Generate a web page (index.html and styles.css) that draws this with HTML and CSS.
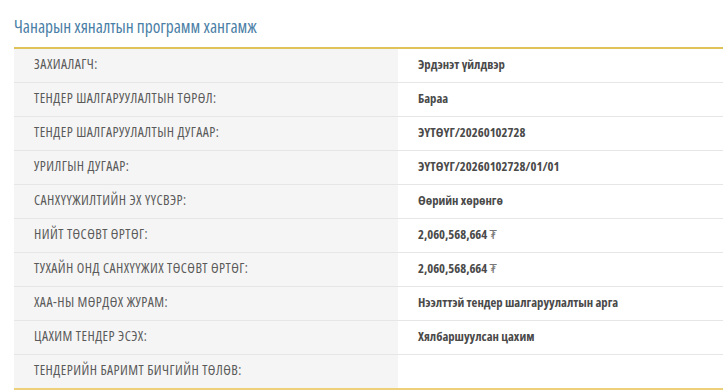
FILE: index.html
```html
<!DOCTYPE html>
<html lang="mn">
<head>
<meta charset="utf-8">
<title>Чанарын хяналтын программ хангамж</title>
<link rel="stylesheet" href="styles.css">
</head>
<body>
<div class="page">
  <h2 class="title">Чанарын хяналтын программ хангамж</h2>
  <table class="info">
    <tbody>
      <tr><th>ЗАХИАЛАГЧ:</th><td>Эрдэнэт үйлдвэр</td></tr>
      <tr><th>ТЕНДЕР ШАЛГАРУУЛАЛТЫН ТӨРӨЛ:</th><td>Бараа</td></tr>
      <tr><th>ТЕНДЕР ШАЛГАРУУЛАЛТЫН ДУГААР:</th><td>ЭҮТӨҮГ/20260102728</td></tr>
      <tr><th>УРИЛГЫН ДУГААР:</th><td>ЭҮТӨҮГ/20260102728/01/01</td></tr>
      <tr><th>САНХҮҮЖИЛТИЙН ЭХ ҮҮСВЭР:</th><td>Өөрийн хөрөнгө</td></tr>
      <tr><th>НИЙТ ТӨСӨВТ ӨРТӨГ:</th><td>2,060,568,664 <span class="cur">₮</span></td></tr>
      <tr><th>ТУХАЙН ОНД САНХҮҮЖИХ ТӨСӨВТ ӨРТӨГ:</th><td>2,060,568,664 <span class="cur">₮</span></td></tr>
      <tr><th>ХАА-НЫ МӨРДӨХ ЖУРАМ:</th><td>Нээлттэй тендер шалгаруулалтын арга</td></tr>
      <tr><th>ЦАХИМ ТЕНДЕР ЭСЭХ:</th><td>Хялбаршуулсан цахим</td></tr>
      <tr><th>ТЕНДЕРИЙН БАРИМТ БИЧГИЙН ТӨЛӨВ:</th><td></td></tr>
    </tbody>
  </table>
</div>
</body>
</html>
```
FILE: styles.css
```css
html, body {
  margin: 0;
  padding: 0;
  background: #ffffff;
  overflow: hidden;
}
.page {
  padding: 16px 0 0 14px;
  font-family: "Open Sans", "DejaVu Sans Condensed", sans-serif;
}
.title {
  margin: 0 0 10px 0;
  font-size: 17.4px;
  font-weight: normal;
  font-stretch: 75%;
  color: #4b80a6;
  line-height: 21px;
}
.info {
  width: 709px;
  border-collapse: collapse;
  border-top: 2px solid #e0c25a;
  border-bottom: 2px solid #ecd07a;
}
.info tr {
  border-bottom: 1px solid #e6e6e6;
}
.info tr:last-child {
  border-bottom: none;
}
.info th,
.info td {
  padding: 0 0 3px 20px;
  height: 30px;
  vertical-align: middle;
  line-height: 16px;
}
.info th {
  width: 364px;
  background: #f5f5f5;
  text-align: left;
  font-weight: normal;
  font-size: 13.8px;
  letter-spacing: 0.45px;
  font-stretch: 75%;
  color: #5a5a5a;
}
.info td {
  font-size: 12.7px;
  font-weight: bold;
  font-stretch: 75%;
  color: #4a4a4a;
}
.cur {
  font-weight: normal;
  color: #777;
}
```
